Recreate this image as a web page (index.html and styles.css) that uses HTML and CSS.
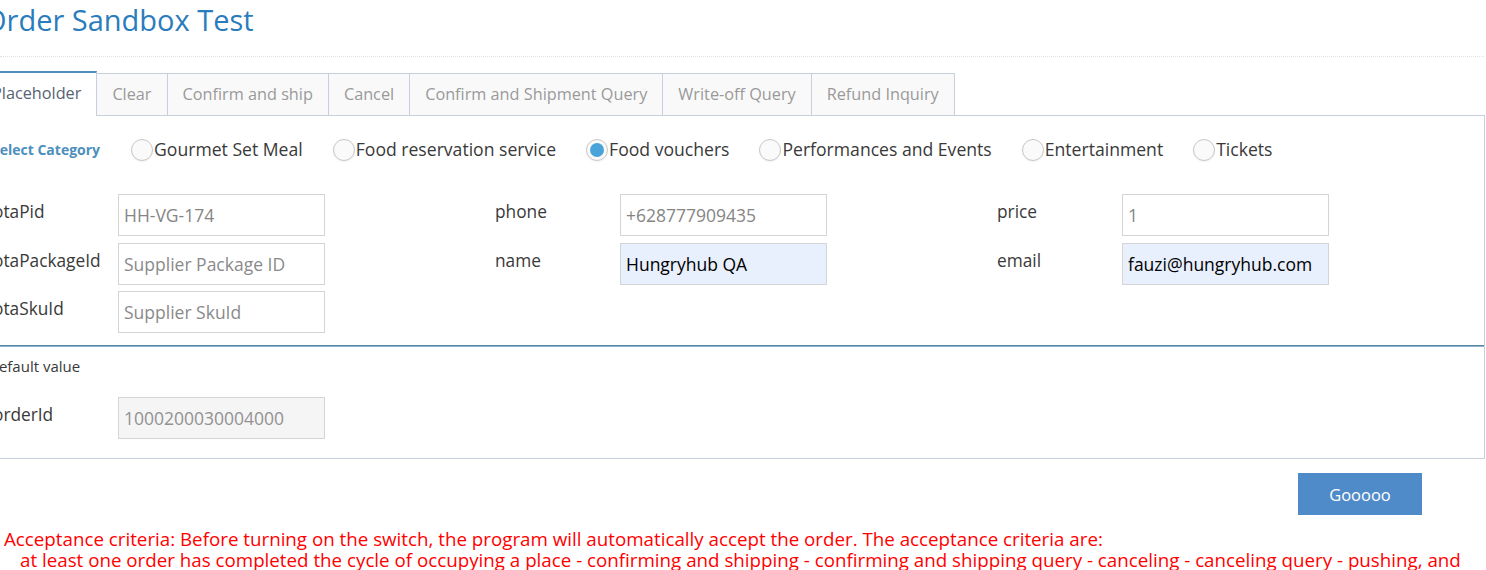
FILE: index.html
```html
<!DOCTYPE html>
<html>
<head>
<meta charset="utf-8">
<link rel="stylesheet" href="styles.css">
</head>
<body>
<div class="page">
  <div class="page-header">
    <h1>Order Sandbox Test</h1>
  </div>

  <div class="tabs">
    <div class="tab active">Placeholder</div>
    <div class="tab">Clear</div>
    <div class="tab">Confirm and ship</div>
    <div class="tab">Cancel</div>
    <div class="tab">Confirm and Shipment Query</div>
    <div class="tab">Write-off Query</div>
    <div class="tab">Refund Inquiry</div>
  </div>

  <div class="tab-content">
    <div class="section">
      <div class="category-row">
        <span class="category-title">Select Category</span>
        <label class="radio"><input type="radio" name="cat"><span>Gourmet Set Meal</span></label>
        <label class="radio"><input type="radio" name="cat"><span>Food reservation service</span></label>
        <label class="radio"><input type="radio" name="cat" checked><span>Food vouchers</span></label>
        <label class="radio"><input type="radio" name="cat"><span>Performances and Events</span></label>
        <label class="radio"><input type="radio" name="cat"><span>Entertainment</span></label>
        <label class="radio"><input type="radio" name="cat"><span>Tickets</span></label>
      </div>

      <div class="fields">
        <div class="field"><span class="field-label">otaPid</span><input class="input" type="text" value="HH-VG-174"></div>
        <div class="field"><span class="field-label">phone</span><input class="input" type="text" value="+628777909435"></div>
        <div class="field"><span class="field-label">price</span><input class="input" type="text" value="1"></div>

        <div class="field"><span class="field-label">otaPackageId</span><input class="input" type="text" placeholder="Supplier Package ID"></div>
        <div class="field"><span class="field-label">name</span><input class="input filled" type="text" value="Hungryhub QA"></div>
        <div class="field"><span class="field-label">email</span><input class="input filled" type="text" value="fauzi@hungryhub.com"></div>

        <div class="field"><span class="field-label">otaSkuId</span><input class="input" type="text" placeholder="Supplier SkuId"></div>
      </div>
    </div>

    <div class="divider"></div>

    <div class="section section-default">
      <div class="default-title">Default value</div>
      <div class="fields">
        <div class="field"><span class="field-label">orderId</span><input class="input readonly" type="text" value="1000200030004000" readonly></div>
      </div>
    </div>
  </div>

  <div class="actions">
    <button class="btn-primary" type="button">Gooooo</button>
  </div>
</div>

<div class="notes">
  <div class="note-line">Acceptance criteria: Before turning on the switch, the program will automatically accept the order. The acceptance criteria are:</div>
  <div class="note-line indent">at least one order has completed the cycle of occupying a place - confirming and shipping - confirming and shipping query - canceling - canceling query - pushing, and</div>
  <div class="note-line indent">the refund inquiry has been completed.</div>
</div>
</body>
</html>
```

FILE: styles.css
```css
* {
  box-sizing: border-box;
}

html, body {
  margin: 0;
  padding: 0;
  background: #ffffff;
  overflow: hidden;
}

body {
  font-family: "Open Sans", "Liberation Sans", sans-serif;
  color: #393939;
  font-size: 16px;
}

.page {
  margin-left: -22px;
  width: 1507px;
}

.page-header {
  padding-bottom: 16px;
  border-bottom: 1px dotted #e2e2e2;
  margin-left: 22px;
  margin-right: 1px;
}

.page-header h1 {
  margin: 0 0 0 -16px;
  font-size: 29px;
  line-height: 40px;
  font-weight: 400;
  color: #2b7cbc;
}

.tabs {
  display: flex;
  align-items: flex-end;
  margin-top: 14px;
  margin-bottom: -1px;
  position: relative;
  z-index: 1;
}

.tab {
  height: 43px;
  padding: 0 15px 2px;
  margin-right: -1px;
  border: 1px solid #c5d0dc;
  background: #f9f9f9;
  color: #999999;
  font-size: 16.25px;
  display: flex;
  align-items: center;
  white-space: nowrap;
}

.tab.active {
  height: 45px;
  border-top: 2px solid #4c8fbd;
  border-bottom: 0;
  background: #ffffff;
  color: #576373;
  padding: 0 15px 3px 13px;
}

.tab-content {
  border: 1px solid #c5d0dc;
}

.section {
  padding: 23px 14px 12px;
}

.category-row {
  display: flex;
  align-items: center;
  height: 20px;
}

.category-title {
  font-size: 14px;
  font-weight: 700;
  color: #4c8fbd;
  margin-right: 31px;
  margin-left: -1px;
}

.radio {
  display: flex;
  align-items: center;
  margin-right: 30px;
  font-size: 17.6px;
  color: #393939;
}

.radio input {
  appearance: none;
  -webkit-appearance: none;
  width: 22px;
  height: 22px;
  margin: 1px 1px 0 0;
  border: 1px solid #c8c8c8;
  border-radius: 50%;
  background: #fafafa;
  box-shadow: 0 1px 2px rgba(0, 0, 0, 0.05);
  display: flex;
  align-items: center;
  justify-content: center;
}

.radio input:checked::after {
  content: "";
  width: 14px;
  height: 14px;
  border-radius: 50%;
  background: #4aa3d8;
}

.fields {
  display: grid;
  grid-template-columns: 502px 502px 502px;
  row-gap: 6.5px;
  margin-top: 35px;
}

.field {
  display: flex;
  align-items: flex-start;
}

.field-label {
  width: 125px;
  line-height: 36px;
  font-size: 17.3px;
  color: #393939;
}

.input {
  width: 207px;
  height: 42px;
  border: 1px solid #d5d5d5;
  padding: 0 5px;
  font-family: "Open Sans", "Liberation Sans", sans-serif;
  font-size: 17.5px;
  color: #858585;
  background: #ffffff;
  outline: none;
}

.input::placeholder {
  color: #8a8a8a;
}

.input.filled {
  background: #e8f0fe;
  color: #000000;
}

.input.readonly {
  background: #f5f5f5;
  color: #939192;
}

.divider {
  height: 2px;
  border-top: 1px solid #5584a3;
  border-bottom: 1px solid #8fb6d0;
}

.section-default {
  padding-top: 9px;
  padding-bottom: 19px;
}

.default-title {
  font-size: 15px;
  line-height: 20px;
  margin-left: -5px;
}

.section-default .fields {
  margin-top: 21px;
}

.actions {
  display: flex;
  justify-content: flex-end;
  padding: 14px 63px 0 0;
}

.btn-primary {
  width: 124px;
  height: 42px;
  border: 0;
  background: #508bc9;
  color: #ffffff;
  font-family: "Open Sans", "Liberation Sans", sans-serif;
  font-size: 16.5px;
}

.notes {
  margin-top: 13px;
  padding-left: 4px;
  color: #ff0000;
  font-size: 18.75px;
  line-height: 21px;
}

.note-line {
  white-space: nowrap;
}

.note-line.indent {
  padding-left: 16px;
}
```
